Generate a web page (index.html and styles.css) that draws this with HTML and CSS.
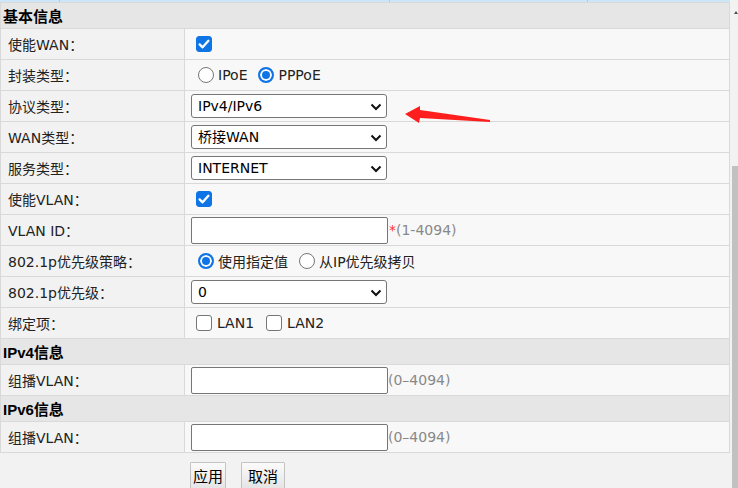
FILE: index.html
```html
<!DOCTYPE html>
<html lang="zh-CN">
<head>
<meta charset="utf-8">
<title>WAN 配置</title>
<link rel="stylesheet" href="styles.css">
</head>
<body>
<div class="frame">
  <div class="topstrip"><span class="ts ts1"></span><span class="ts ts2"></span><span class="ts ts3"></span><span class="ts ts4"></span></div>
  <table class="form">
    <colgroup><col class="c1"><col class="c2"></colgroup>
    <tr class="sec"><th colspan="2">基本信息</th></tr>
    <tr><td class="lbl">使能WAN：</td><td class="val"><div class="ctl"><span class="cb on"><svg viewBox="0 0 16 16" width="16" height="16"><polyline points="3.6,8.4 6.6,11.3 12.4,4.8" fill="none" stroke="#fff" stroke-width="2.3" stroke-linecap="round" stroke-linejoin="round"/></svg></span></div></td></tr>
    <tr><td class="lbl">封装类型：</td><td class="val"><div class="ctl"><span class="rd"></span><span class="opt">IPoE</span><span class="rd on"></span><span class="opt">PPPoE</span></div></td></tr>
    <tr><td class="lbl">协议类型：</td><td class="val"><div class="ctl"><span class="sel"><select><option>IPv4/IPv6</option></select><svg class="chev" viewBox="0 0 12 8" width="12" height="8"><polyline points="1.5,1.5 6,6 10.5,1.5" fill="none" stroke="#111" stroke-width="2"/></svg></span></div></td></tr>
    <tr><td class="lbl">WAN类型：</td><td class="val"><div class="ctl"><span class="sel"><select><option>桥接WAN</option></select><svg class="chev" viewBox="0 0 12 8" width="12" height="8"><polyline points="1.5,1.5 6,6 10.5,1.5" fill="none" stroke="#111" stroke-width="2"/></svg></span></div></td></tr>
    <tr><td class="lbl">服务类型：</td><td class="val"><div class="ctl"><span class="sel"><select><option>INTERNET</option></select><svg class="chev" viewBox="0 0 12 8" width="12" height="8"><polyline points="1.5,1.5 6,6 10.5,1.5" fill="none" stroke="#111" stroke-width="2"/></svg></span></div></td></tr>
    <tr><td class="lbl">使能VLAN：</td><td class="val"><div class="ctl"><span class="cb on"><svg viewBox="0 0 16 16" width="16" height="16"><polyline points="3.6,8.4 6.6,11.3 12.4,4.8" fill="none" stroke="#fff" stroke-width="2.3" stroke-linecap="round" stroke-linejoin="round"/></svg></span></div></td></tr>
    <tr><td class="lbl">VLAN ID：</td><td class="val"><div class="ctl"><input class="txt" type="text"><span class="req">*</span><span class="hint">(1-4094)</span></div></td></tr>
    <tr><td class="lbl">802.1p优先级策略：</td><td class="val"><div class="ctl"><span class="rd on"></span><span class="opt">使用指定值</span><span class="rd"></span><span class="opt">从IP优先级拷贝</span></div></td></tr>
    <tr><td class="lbl">802.1p优先级：</td><td class="val"><div class="ctl"><span class="sel"><select><option>0</option></select><svg class="chev" viewBox="0 0 12 8" width="12" height="8"><polyline points="1.5,1.5 6,6 10.5,1.5" fill="none" stroke="#111" stroke-width="2"/></svg></span></div></td></tr>
    <tr><td class="lbl">绑定项：</td><td class="val"><div class="ctl"><span class="cb"></span><span class="opt">LAN1</span><span class="cb"></span><span class="opt">LAN2</span></div></td></tr>
    <tr class="sec"><th colspan="2">IPv4信息</th></tr>
    <tr><td class="lbl">组播VLAN：</td><td class="val"><div class="ctl"><input class="txt" type="text"><span class="hint">(0–4094)</span></div></td></tr>
    <tr class="sec"><th colspan="2">IPv6信息</th></tr>
    <tr><td class="lbl">组播VLAN：</td><td class="val"><div class="ctl"><input class="txt" type="text"><span class="hint">(0–4094)</span></div></td></tr>
  </table>
  <div class="actions"><button class="btn btn-apply">应用</button><button class="btn btn-cancel">取消</button></div>
  <svg class="arrow" viewBox="0 0 95 30" width="95" height="30"><polygon points="5,14 20,6 20,10 90,20 90,22 20,18 19,23" fill="#ff1e1e"/></svg>
  <svg class="sb-arrow" viewBox="0 0 4 5" width="4" height="5"><polygon points="0,4 2,1 4,4" fill="#505050"/></svg>
  <div class="scrollbar"></div>
</div>
</body>
</html>
```

FILE: styles.css
```css
html, body {
  margin: 0;
  padding: 0;
  background: #f2f2f2;
  overflow: hidden;
}

.frame {
  position: relative;
  width: 738px;
  height: 488px;
  overflow: hidden;
  font-family: "DejaVu Sans", "Noto Sans CJK SC", sans-serif;
  font-size: 14px;
  color: #222;
}

.topstrip {
  display: flex;
  width: 730px;
  height: 2px;
  background: #cbe6f7;
}

.ts {
  height: 2px;
  border-right: 1px solid #aecde4;
}
.ts1 { width: 59px; }
.ts2 { width: 329px; }
.ts3 { width: 197px; }
.ts4 { flex: 1; border-right: none; }

.form {
  border-collapse: collapse;
  table-layout: fixed;
  width: 730px;
}

.c1 { width: 184px; }

.form td,
.form th {
  border: 1px solid #d9d9d9;
  padding: 0;
}

.form tr.sec th {
  height: 25px;
  background: #e6e6e6;
  text-align: left;
  padding-left: 2px;
  font-family: "Liberation Sans", "Noto Sans CJK SC", sans-serif;
  font-weight: bold;
  font-size: 15px;
  color: #000;
}

.form td {
  height: 30px;
}

.lbl {
  background: #f2f2f2;
  padding-left: 7px !important;
  white-space: nowrap;
}

.val {
  background: #f8f8f8;
  padding-left: 6px !important;
}

.ctl {
  display: flex;
  align-items: center;
  height: 30px;
}

.cb {
  display: inline-block;
  width: 16px;
  height: 16px;
  box-sizing: border-box;
  border-radius: 3px;
  border: 1px solid #767676;
  background: #fff;
  margin-left: 5px;
  margin-right: 5px;
}
.cb svg { display: block; margin: -1px; }
.cb.on {
  background: #0f74e6;
  border-color: #0f74e6;
}

.rd {
  display: inline-block;
  width: 16px;
  height: 16px;
  box-sizing: border-box;
  border-radius: 50%;
  border: 1px solid #767676;
  background: #fff;
  margin-left: 7px;
  margin-right: 4px;
}
.rd.on {
  border: 2px solid #0f74e6;
  background: #0f74e6;
  box-shadow: inset 0 0 0 2px #fff;
}

.opt + .rd { margin-left: 11px; }
.opt + .cb { margin-left: 12px; }

.opt {
  color: #222;
}

.sel {
  position: relative;
  display: inline-block;
  height: 24px;
}

.sel select {
  -webkit-appearance: none;
  appearance: none;
  width: 196px;
  height: 24px;
  box-sizing: border-box;
  border: 1px solid #767676;
  border-radius: 3px;
  background: #fff;
  padding: 0 0 0 6px;
  margin: 0;
  font-family: "DejaVu Sans", "Noto Sans CJK SC", sans-serif;
  font-size: 14px;
  color: #000;
}

.chev {
  position: absolute;
  right: 5px;
  top: 9px;
  pointer-events: none;
}

.txt {
  width: 197px;
  height: 27px;
  box-sizing: border-box;
  border: 1px solid #767676;
  border-radius: 2px;
  background: #fff;
  margin: 0;
  padding: 0 4px;
}

.req {
  color: #f33;
  margin-left: 1px;
}

.hint {
  color: #888;
}

.actions {
  display: flex;
  gap: 15px;
  padding: 9px 0 0 190px;
}

.btn {
  height: 28px;
  box-sizing: border-box;
  border: 1px solid #c3c3c3;
  border-radius: 1px;
  background: linear-gradient(#fbfbfb, #e4e4e4);
  font-family: "Noto Sans CJK SC", sans-serif;
  font-size: 15px;
  color: #000;
  line-height: 24px;
  margin: 0;
}
.btn-apply { padding: 0 2px; }
.btn-cancel { padding: 0 6px; }

.arrow {
  position: absolute;
  left: 400px;
  top: 100px;
}

.sb-arrow {
  position: absolute;
  left: 734px;
  top: 10px;
}

.scrollbar {
  position: absolute;
  left: 732px;
  top: 166px;
  width: 6px;
  height: 322px;
  background: #c1c1c1;
}
```
